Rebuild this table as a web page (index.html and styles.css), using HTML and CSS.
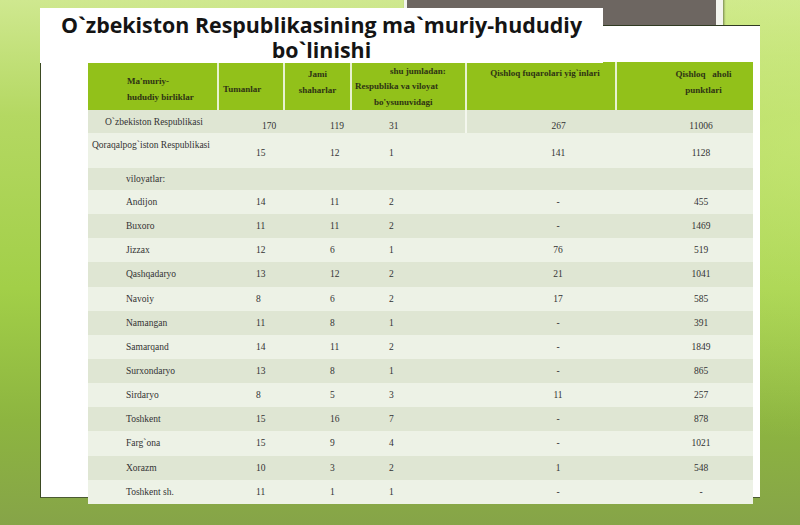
FILE: index.html
```html
<!DOCTYPE html>
<html>
<head>
<meta charset="utf-8">
<link rel="stylesheet" href="styles.css">
</head>
<body>
<div class="slide">
  <div class="photo-frame"><div class="photo"></div></div>
  <div class="card">
    <table class="data">
      <colgroup>
        <col class="c1"><col class="c2"><col class="c3"><col class="c4"><col class="c5"><col class="c6">
      </colgroup>
      <thead>
        <tr>
          <th class="h-name"><span>Ma'muriy-<br>hududiy birliklar</span></th>
          <th class="h-mid">Tumanlar</th>
          <th class="h-top">Jami<br>shaharlar</th>
          <th class="h-top h-shu"><span class="ind">shu jumladan:</span><br>Respublika va viloyat<br><span class="ind2">bo'ysunuvidagi</span></th>
          <th class="h-top h-q">Qishloq fuqarolari yig`inlari</th>
          <th class="h-top h-a">Qishloq &nbsp;&nbsp;aholi<br>punktlari</th>
        </tr>
      </thead>
      <tbody>
        <tr class="r-total dark">
          <td class="name n-total">O`zbekiston Respublikasi</td>
          <td class="n2 low">170</td><td class="n3 low">119</td><td class="n4 low">31</td><td class="n5 low">267</td><td class="n6 low">11006</td>
        </tr>
        <tr class="r-qq light">
          <td class="name n-qq">Qoraqalpog`iston Respublikasi</td>
          <td class="n2">15</td><td class="n3">12</td><td class="n4">1</td><td class="n5">141</td><td class="n6">1128</td>
        </tr>
        <tr class="r-vil dark">
          <td class="name">viloyatlar:</td>
          <td></td><td></td><td></td><td></td><td></td>
        </tr>
        <tr class="row light"><td class="name">Andijon</td><td class="n2">14</td><td class="n3">11</td><td class="n4">2</td><td class="n5">-</td><td class="n6">455</td></tr>
        <tr class="row dark"><td class="name">Buxoro</td><td class="n2">11</td><td class="n3">11</td><td class="n4">2</td><td class="n5">-</td><td class="n6">1469</td></tr>
        <tr class="row light"><td class="name">Jizzax</td><td class="n2">12</td><td class="n3">6</td><td class="n4">1</td><td class="n5">76</td><td class="n6">519</td></tr>
        <tr class="row dark"><td class="name">Qashqadaryo</td><td class="n2">13</td><td class="n3">12</td><td class="n4">2</td><td class="n5">21</td><td class="n6">1041</td></tr>
        <tr class="row light"><td class="name">Navoiy</td><td class="n2">8</td><td class="n3">6</td><td class="n4">2</td><td class="n5">17</td><td class="n6">585</td></tr>
        <tr class="row dark"><td class="name">Namangan</td><td class="n2">11</td><td class="n3">8</td><td class="n4">1</td><td class="n5">-</td><td class="n6">391</td></tr>
        <tr class="row light"><td class="name">Samarqand</td><td class="n2">14</td><td class="n3">11</td><td class="n4">2</td><td class="n5">-</td><td class="n6">1849</td></tr>
        <tr class="row dark"><td class="name">Surxondaryo</td><td class="n2">13</td><td class="n3">8</td><td class="n4">1</td><td class="n5">-</td><td class="n6">865</td></tr>
        <tr class="row light"><td class="name">Sirdaryo</td><td class="n2">8</td><td class="n3">5</td><td class="n4">3</td><td class="n5">11</td><td class="n6">257</td></tr>
        <tr class="row dark"><td class="name">Toshkent</td><td class="n2">15</td><td class="n3">16</td><td class="n4">7</td><td class="n5">-</td><td class="n6">878</td></tr>
        <tr class="row light"><td class="name">Farg`ona</td><td class="n2">15</td><td class="n3">9</td><td class="n4">4</td><td class="n5">-</td><td class="n6">1021</td></tr>
        <tr class="row dark"><td class="name">Xorazm</td><td class="n2">10</td><td class="n3">3</td><td class="n4">2</td><td class="n5">1</td><td class="n6">548</td></tr>
        <tr class="row light"><td class="name">Toshkent sh.</td><td class="n2">11</td><td class="n3">1</td><td class="n4">1</td><td class="n5">-</td><td class="n6">-</td></tr>
      </tbody>
    </table>
  </div>
  <div class="title-box">
    <h1 class="title"><span class="tl">O`zbekiston Respublikasining ma`muriy-hududiy</span><span class="tl">bo`linishi</span></h1>
  </div>
</div>
</body>
</html>
```

FILE: styles.css
```css
html, body {
  margin: 0;
  padding: 0;
}
body {
  width: 800px;
  height: 525px;
  overflow: hidden;
  font-family: "Liberation Serif", serif;
}
.slide {
  position: relative;
  width: 800px;
  height: 525px;
  overflow: hidden;
  background:
    radial-gradient(ellipse 420px 300px at 820px 140px, rgba(210, 240, 130, 0.55), rgba(210, 240, 130, 0) 100%),
    linear-gradient(180deg, #cfe88f 0%, #b4d862 22%, #a2cf48 55%, #8db540 80%, #86a448 100%);
}
.photo-frame {
  position: absolute;
  left: 404px;
  top: -4px;
  width: 309px;
  height: 49px;
  background: #f3f4ee;
  padding: 0 7px 7px 3px;
  box-shadow: 1px 1px 2px rgba(0, 0, 0, 0.45);
}
.photo {
  width: 100%;
  height: 100%;
  background: #6d6661;
}
.card {
  position: absolute;
  left: 40px;
  top: 25px;
  width: 720px;
  height: 473px;
  background: #ffffff;
  border-left: 1px solid #3b4a22;
  border-top: 1px solid #2f3a22;
  border-bottom: 1px solid #4b5a33;
  box-sizing: border-box;
  padding: 36px 0 0 47px;
}
.title-box {
  position: absolute;
  left: 40px;
  top: 8px;
  width: 563px;
  height: 55px;
  background: #ffffff;
}
.title {
  margin: 0;
  padding-top: 4px;
  text-align: center;
  font-family: "Open Sans", sans-serif;
  font-weight: 700;
  font-size: 21.4px;
  line-height: 25px;
  color: #141414;
}
.tl {
  display: block;
  height: 25px;
}
.data {
  border-collapse: collapse;
  table-layout: fixed;
  width: 665px;
  font-size: 9.5px;
  color: #333333;
}
.c1 { width: 130px; }
.c2 { width: 66px; }
.c3 { width: 67px; }
.c4 { width: 115px; }
.c5 { width: 150px; }
.c6 { width: 137px; }
.data th {
  background: #92c11a;
  color: #2e3314;
  font-weight: 700;
  font-size: 9px;
  line-height: 16px;
  height: 48px;
  padding: 0;
  border-left: 2px solid #e8f2cf;
  box-sizing: border-box;
}
.data th:first-child { border-left: none; }
.h-name {
  text-align: left;
  padding-left: 39px !important;
  padding-top: 5px !important;
  vertical-align: middle;
}
.h-mid {
  text-align: left;
  padding-left: 4px !important;
  padding-top: 5px !important;
  vertical-align: middle;
}
.h-top {
  vertical-align: top;
  padding-top: 4px !important;
  text-align: center;
}
.data th.h-shu {
  text-align: left;
  padding-left: 3px;
  padding-top: 2px !important;
  line-height: 15.3px;
}
.h-shu .ind { padding-left: 35px; }
.h-shu .ind2 { padding-left: 19px; }
.h-q { padding-top: 3px !important; padding-left: 8px !important; }
.h-a { padding-left: 37px !important; }
.data td {
  padding: 0;
  white-space: nowrap;
  vertical-align: middle;
  box-sizing: border-box;
  line-height: 12px;
}
.dark td { background: #dfe6d3; }
.light td { background: #edf2e6; }
.r-total td { height: 23px; }
.r-qq td { height: 35px; }
.r-vil td { height: 22px; }
.row td { height: 24.15px; }
.name { padding-left: 38px !important; }
.n-total { padding-left: 17px !important; }
.n-qq { padding-left: 4px !important; vertical-align: top !important; padding-top: 6px !important; }
.r-qq td:not(.name) { padding-top: 4px; }
.low { padding-top: 9px !important; }
.r-total .n-total { padding-top: 0 !important; }
.n2 { padding-left: 38px !important; }
.r-total .n2 { padding-left: 44px !important; }
.n3 { padding-left: 46px !important; }
.n4 { padding-left: 38px !important; }
.n5 { padding-left: 34px !important; text-align: center; }
.n6 { padding-left: 33px !important; text-align: center; }
.r-total .n5 { border-left: 2px solid #f4f7ee; }
```
